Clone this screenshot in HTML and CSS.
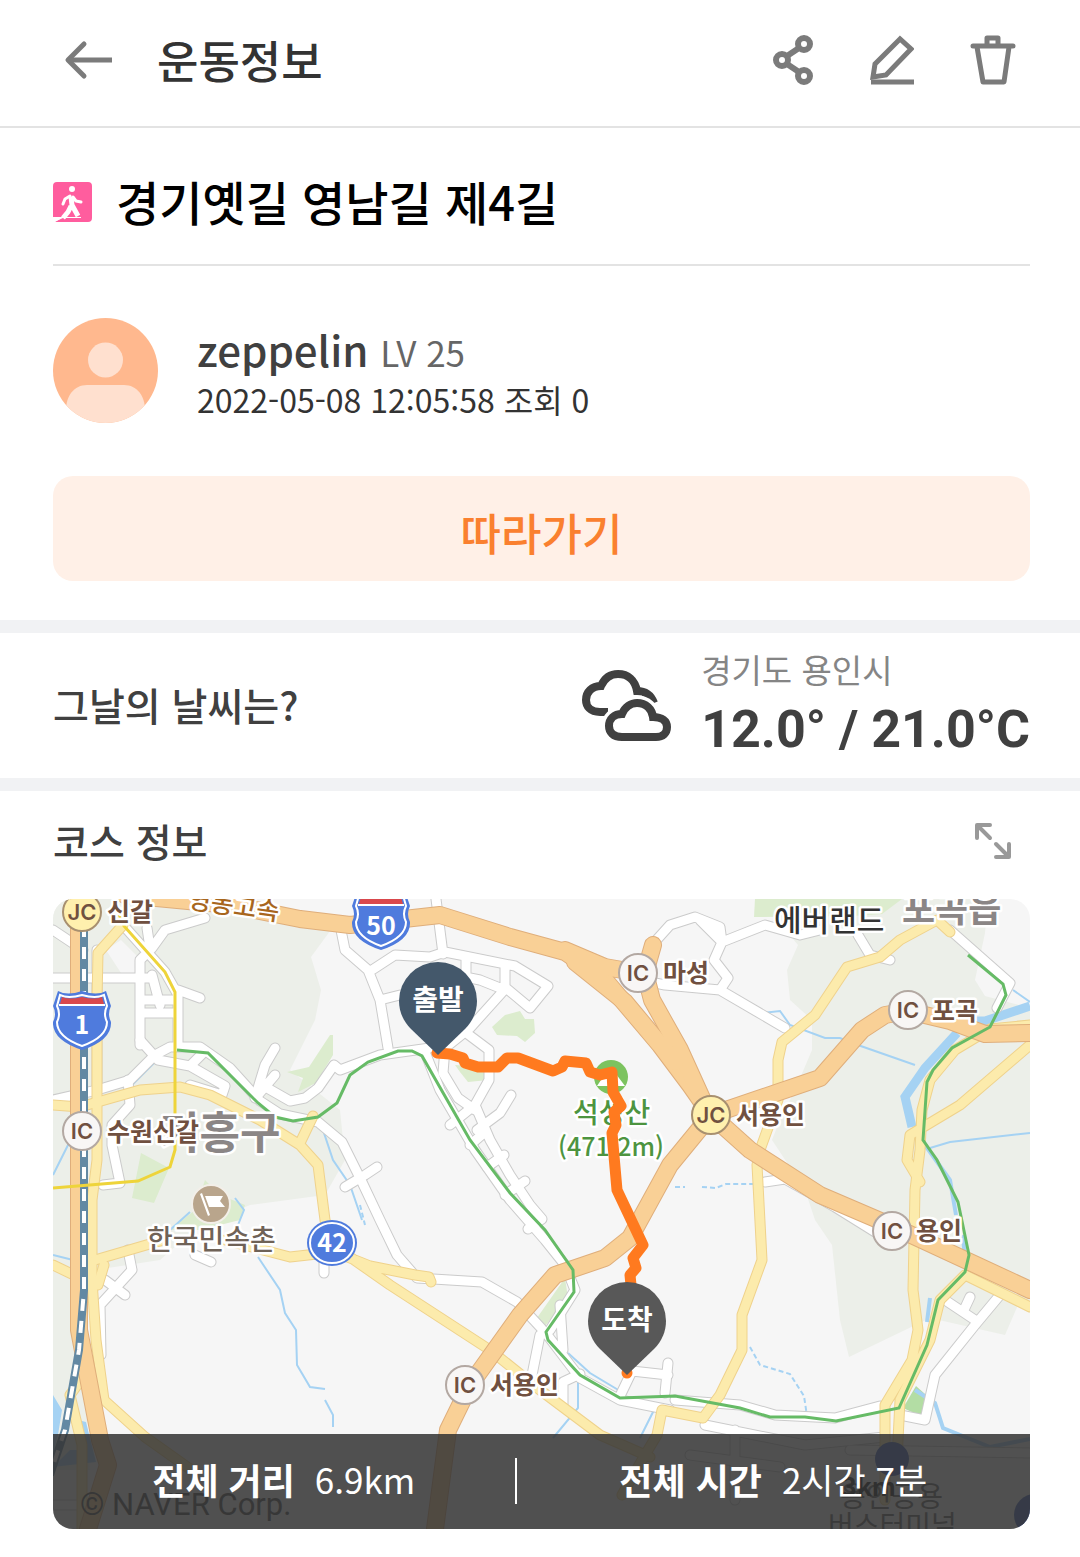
FILE: index.html
```html
<!DOCTYPE html>
<html lang="ko">
<head>
    <meta charset="UTF-8">
    <meta name="viewport" content="width=device-width, initial-scale=1.0">
    <title>운동정보</title>
    <link rel="stylesheet" href="styles.css">
</head>
<body>
    <header class="topbar">
        <button class="icon-btn" type="button" aria-label="뒤로">
            <svg width="48" height="40" viewBox="0 0 48 40" fill="none" stroke="#7b7b7b" stroke-width="5" stroke-linecap="round" stroke-linejoin="round">
                <path d="M20 4 4 20l16 16"/>
                <path d="M5 20h43" stroke-linecap="butt"/>
            </svg>
        </button>
        <h1 class="topbar-title">운동정보</h1>
        <div class="topbar-actions">
            <button class="icon-btn" type="button" aria-label="공유">
                <svg width="44" height="54" viewBox="0 0 44 54" fill="none" stroke="#7b7b7b" stroke-width="6">
                    <circle cx="34" cy="11" r="6"/>
                    <circle cx="12" cy="27" r="6"/>
                    <circle cx="34" cy="43" r="6"/>
                    <path d="m17 23 12-8M17 31l12 8"/>
                </svg>
            </button>
            <button class="icon-btn" type="button" aria-label="수정">
                <svg width="44" height="54" viewBox="0 0 44 54" fill="none" stroke="#7b7b7b" stroke-width="5" stroke-linejoin="round">
                    <path d="M30 6 5 31 3 44l13-2 25-26Z" stroke-linejoin="miter"/>
                    <path d="M1 49h43"/>
                </svg>
            </button>
            <button class="icon-btn" type="button" aria-label="삭제">
                <svg width="46" height="54" viewBox="0 0 46 54" fill="none" stroke="#7b7b7b" stroke-width="5" stroke-linecap="round" stroke-linejoin="round">
                    <path d="M3 13h40M17 12V5h11v7M7 14l6 35h21l5-35"/>
                </svg>
            </button>
        </div>
    </header>

    <main>
        <section class="post">
            <div class="post-title">
                <svg class="walk-icon" width="39" height="40" viewBox="0 0 39 40">
                    <path fill="#ff5d9e" d="M4 0h31a4 4 0 0 1 4 4v32a4 4 0 0 1-4 4H2l5-3-7-2V4a4 4 0 0 1 4-4Z"/>
                    <circle cx="19" cy="7" r="3" fill="#fff"/>
                    <path d="m17 14-5 3-2 5M20 15l3 4 5 1" fill="none" stroke="#fff" stroke-width="3" stroke-linecap="round" stroke-linejoin="round"/>
                    <path d="M18 15l1 8 6 11M18 24l-3 6-5 6" fill="none" stroke="#fff" stroke-width="5" stroke-linejoin="round"/>
                    <path fill="#fff" d="M0 35h28v1H10l-9 4Z"/>
                </svg>
                <h2>경기옛길 영남길 제4길</h2>
            </div>

            <div class="user">
                <svg class="avatar" width="105" height="105" viewBox="0 0 105 105">
                    <clipPath id="avatarClip"><circle cx="52.5" cy="52.5" r="52.5"/></clipPath>
                    <g clip-path="url(#avatarClip)">
                        <path fill="#ffb88e" d="M0 0h105v105H0z"/>
                        <circle cx="52.5" cy="42" r="17.5" fill="#ffe0cf"/>
                        <path fill="#ffe0cf" d="M13 105V92c0-14 8-25 21-25h37c13 0 21 11 21 25v13Z"/>
                    </g>
                </svg>
                <div>
                    <p class="user-name">zeppelin <span>LV 25</span></p>
                    <p class="user-meta">2022-05-08 12:05:58 조회 0</p>
                </div>
            </div>

            <button class="follow-btn" type="button">따라가기</button>
        </section>

        <section class="weather">
            <h3>그날의 날씨는?</h3>
            <svg class="weather-icon" width="92" height="74" viewBox="0 0 92 74">
                <path d="M27 43H19C9 43 5 37 5 31c0-8 6-14 15-14C24 8 30 5 37 5c10 0 17 6 19 17 9 0 14 4 17 12" fill="none" stroke="#404040" stroke-width="8"/>
                <path d="M41 68c-9 0-13-5-13-11 0-7 5-12 13-12 3-7 9-11 15-11 9 0 15 6 16 14 9 0 14 4 14 10s-4 10-11 10Z" fill="none" stroke="#fff" stroke-width="15"/>
                <path d="M41 68c-9 0-13-5-13-11 0-7 5-12 13-12 3-7 9-11 15-11 9 0 15 6 16 14 9 0 14 4 14 10s-4 10-11 10Z" fill="#fff" stroke="#404040" stroke-width="8"/>
            </svg>
            <div class="weather-info">
                <p class="weather-place">경기도 용인시</p>
                <p class="weather-temp">12.0° / 21.0°C</p>
            </div>
        </section>

        <section class="course">
            <div class="course-head">
                <h3>코스 정보</h3>
                <button class="icon-btn" type="button" aria-label="지도 확대">
                    <svg width="36" height="36" viewBox="0 0 36 36" fill="none" stroke="#999" stroke-width="4" stroke-linecap="round" stroke-linejoin="round">
                        <path d="M2 15V2h13M3 3l12 12M34 21v13H21M33 33 21 21"/>
                    </svg>
                </button>
            </div>

            <div class="map">
                <svg class="map-svg" viewBox="53 899 977 630" role="img" aria-label="코스 지도">
                    <defs>
                        <g id="streets">
                            <path d="M53 978h97M140 1045v-85l12-12 13-18 40-12M150 948l-3-20M140 1013h35M140 1000h35M152 975l8 30M123 925l42 47 13 23v50M178 990l22 8"/>
                            <path d="M53 1100l44-10 33-10 25-25 15-8h30l30 21 30 33 20 13 38 8 24 20 20 40 18 38 17 35 20 23 65 4 35 20 25 27"/>
                            <path d="M140 1040l18 20 32 6 35 20-3 9-32-10M190 1066l15-15M97 950v140M128 1080l2 25-18 20v20l8 38-17 2"/>
                            <path d="M255 1098l10-33 10-17M258 1095l17-20M262 1085l28 16 15-3 13-10 16-23 6 5 40-15 50-7M53 930l30 20"/>
                            <path d="M340 925l5 25 23 20 12 30 8 48M372 970l23-15 35 2 15-5 70 14 33 20-18 22-24-20-36 40-25 20-2 25 15 25 17 12M436 899l7 55M505 965v25l-25-10-25-5M380 1000l20-5M466 958v20"/>
                            <path d="M465 1032l24 18v30l-14 25-25 20M425 1052l15 38 35 60 35 50 35 40 20 25 10 25-25 40"/>
                            <path d="M475 1105l15 35 20 35 20 30 12 14-14 10M477 1130l23-17 11-18M470 1145l15-13M487 1167l17-12M505 1195l20-14"/>
                            <path d="M545 1332l35 46 40 22 50 10M540 1335l-8 40M563 1350l-3-45M580 1374l-17 8v24M620 1396l12-25 36 4M668 1363l-3 30"/>
                            <path d="M652 945l18-20 25-8 25 10 2 15 43-17 35 10 20-5M700 920l22 22-8 18 14 18-8 12-55-5-25-5M720 990l65 38M858 935l12 20 20 5"/>
                            <path d="M950 930l60 53-13 25M765 1182l20-3 50 28 45 28M1000 1295l-25 30-40 50-10 45-25-5M945 1300l30 20M970 1297l-7 15"/>
                            <path d="M675 1400l65 5 35 10 60 3 45-12M705 1425l100 20 80-8M735 1430v70M53 1505h30M850 1450l180 3M690 1455l90 12"/>
                            <path d="M128 1250l4 20-32 35 1 50M105 1280l20 15M195 1255l16 7M324 1255v18M345 1187l20-12 12-8"/>
                        </g>
                        <g id="roads">
                            <path d="M123 925l-25 28-1 47v160l-5 40v80l4 60 8 60 41 37 45 32"/>
                            <path d="M53 1105l27 2 60-17 40-3 30 8 50 25 40 25 18 20 7 55 5 30M300 1143l13-27M53 1265l25 12M95 1260l65-19M98 1285l6-20"/>
                            <path d="M225 1240l65 17 45-5 35 14 45 9 14 2 2 5M340 1250l50 35 100 65 50 40 60 45 50 22M88 1370l-18 25 12 50v84"/>
                            <path d="M950 932l-13-12-37 20-20 17-33 10-32 48-33 27-4 18v40l-18 50-3 15 5 95-20 55v35l-22 45-17 23-41-8-5 25-15 25-20 35"/>
                            <path d="M1030 1025l-40 4-35 21-25 30-8 30-2 40-5 40-2 100 5 40-6 30-27 45v95M1030 1045l-70 60-50 30-3 25 13 22M965 1275l-25 25-10 40-30 60-3 60M965 1275l65 32"/>
                        </g>
                        <g id="highway">
                            <path d="M125 895l105 10 70 14 50 6 90-10 70 22 55 15 40 28 55 65 30 40 21 30 39 35 70 45 70 30 140 65"/>
                            <path d="M653 945l-8 28 7 27 28 50 25 55M711 1115l109-37 42-48 23-15 23-4 42 10 35 13 45-1"/>
                            <path d="M711 1115l-41 50-40 73-25 20-50 17-35 40-50 70-22 45-13 99M79 895v435l21 110 8 25-20 64"/>
                            <path d="M565 950l40 17 40 7M575 962l50 40 50 60"/>
                        </g>
                        <path id="pin" d="M0 0-27-26C-35-34-39-44-39-54a39 39 0 1 1 78 0c0 10-4 20-12 28Z"/>
                        <g id="shield">
                            <path fill="#4f7bdd" d="M-24-29q9 5 24 0 15 5 24 0l5 15q-4 8 0 16 1 18-29 28-30-10-29-28 4-8 0-16Z"/>
                            <path fill="#4f7bdd" stroke="#fff" stroke-width="2" d="M-22-25q8 4 22 0 14 4 22 0l3 11q-4 8 0 16 0 15-25 24-25-9-25-24 4-8 0-16Z"/>
                            <path fill="#d9484c" d="M-20-23q8 3 20 0 12 3 20 0l2 7h-44Z"/>
                            <path fill="#fff" d="M-23-16h46v2h-46z"/>
                        </g>
                    </defs>

                    <path fill="#f6f6f6" d="M53 899h977v630H53z"/>

                    <!-- hills and parks -->
                    <g fill="#ecefe9">
                        <path d="M53 899h150l130 28-22 30 10 33-6 30-15 30-10 20 50 40 5 50-20 35-75 10-50 20-40 35-65 10-15 30 10 170H53Z"/>
                        <path d="M755 899h233l-3 34-10 47 10 16 45 12v297h-12l-13 30-75-17-81 39-9-37-8-75-17-25-10-30-33-50 8-20 15-30 17-40v-30l-22-20-3-30 11-25-25-30Z"/>
                    </g>
                    <path fill="#f6f6f6" d="M106 950l15-10 20 20v16h-18Z"/>
                    <g fill="#dcecce">
                        <path d="M755 899h147l-20 15-30 2-98 1Z"/>
                        <path d="M287 1072l22-5 21-32h3v20l-17 28-18 9 5-14ZM492 1027l13-12 15-4 5 8h9l1 14-10 9-8-6-20-1ZM455 1065l30 2 3 13-20 2-8-10ZM141 1153l28 15-15 35-22-5ZM170 1230l25-20 10-30 15 15 25 10-5 15-40 10ZM532 1325l33-47 3 20-23 28Z"/>
                    </g>
                    <path fill="#b3dda4" d="M903 1408l13-22 9 8-2 23Z"/>

                    <!-- rivers -->
                    <g class="water">
                        <path stroke-width="9" d="M1030 1006l-45 15h-15M957 1033l-32 35-20 29 7 30"/>
                        <path stroke-width="4" d="M925 1145l25 35 6 35M963 1235l2 25M930 1298l-3 24M915 1390l20 13 8 25 47 19 40-8"/>
                        <path stroke-width="2" d="M930 1148l20-6 80-9M1013 990l17 12M762 1013l18-2 10 14 35 13h15l15 6 60 21M258 1257l22 33 5 23 11 17 1 35 13 22 15 2M325 1400l8 15v12M318 1115l15 45 17 25 12 35M170 1230l20-18M235 1198l9 12-8 20M568 1353l22 20 30 18M578 1380v28l-25 30M53 1175l20-40M130 1087l25-25M655 1408l-15 30M53 1255l20 5"/>
                        <path stroke-width="2" stroke-dasharray="5 3" d="M750 1347l10 18 30 9 14 22 3 20M702 1187l14 1 10-4h28M360 1205l5 20M675 1187h10"/>
                    </g>
                    <path fill="#a5d2f3" d="M53 1395l9 15-4 25-5 20ZM70 1450h12l-4-30 8 2 10 40-43 5Z"/>

                    <use href="#streets" class="line street-edge"/>
                    <use href="#streets" class="line street"/>
                    <use href="#roads" class="line road-edge"/>
                    <use href="#roads" class="line road"/>
                    <use href="#highway" class="line highway-edge"/>
                    <use href="#highway" class="line highway"/>

                    <!-- railways -->
                    <path class="rail" d="M84 925v365l-5 60-14 80-15 45"/>
                    <path class="rail-dash" d="M84 925v365l-5 60-14 80-15 45"/>
                    <path class="metro yellow" d="M118 912l6 14 41 46 10 20v158l-5 17-32 14-85 7"/>
                    <path class="metro green" d="M177 1050l31 3 50 50 17 14 18 4 25-4 19-14 13-28 18-13 30-11h14l10 5 48 84 40 53 35 37 28 40 1 22-28 40 2 8 32 35 40 23 55-2 65 12 30 9h35l31 4 63-13 28-63 11-45 27-28 4-17-11-53-21-42-14-20 4-58 6-12 19-22 38-21 16-32-3-11-35-29"/>

                    <!-- summit -->
                    <circle cx="611" cy="1077" r="17" fill="#7cc35f"/>
                    <path fill="#fff" d="M597 1086l8-12 4 4 4-8 12 16Z"/>
                    <g class="label">
                        <text class="t28 summit" x="573" y="1123">석성산</text>
                        <text class="t25 summit" x="558" y="1156">(471.2m)</text>
                        <text class="t25 highway-name" transform="translate(187 908) rotate(8)">영동고속</text>
                        <text class="t44 district" x="159" y="1149">기흥구</text>
                        <text class="t36 district" x="902" y="922">포곡읍</text>
                        <text class="t30 place" x="774" y="931">에버랜드</text>
                        <text class="t28 village" x="147" y="1250">한국민속촌</text>
                        <text class="t25 exit" x="107" y="921">신갈</text>
                        <text class="t25 exit" x="107" y="1141">수원신갈</text>
                        <text class="t25 exit" x="663" y="982">마성</text>
                        <text class="t25 exit" x="736" y="1124">서용인</text>
                        <text class="t25 exit" x="932" y="1020">포곡</text>
                        <text class="t25 exit" x="916" y="1240">용인</text>
                        <text class="t25 exit" x="490" y="1394">서용인</text>
                    </g>

                    <circle cx="211" cy="1204" r="19" fill="#b9a58c" stroke="#f3efe9" stroke-width="2"/>
                    <path fill="#fff" d="M200 1194l2-1 8 22-2 1ZM205 1196h18l-3 5 5 6h-16Z"/>

                    <g class="junction">
                        <circle cx="82" cy="912" r="19" class="jc"/><text x="82" y="920">JC</text>
                        <circle cx="711" cy="1115" r="19" class="jc"/><text x="711" y="1123">JC</text>
                        <circle cx="638" cy="973" r="19"/><text x="638" y="981">IC</text>
                        <circle cx="908" cy="1010" r="19"/><text x="908" y="1018">IC</text>
                        <circle cx="82" cy="1131" r="19"/><text x="82" y="1139">IC</text>
                        <circle cx="892" cy="1231" r="19"/><text x="892" y="1239">IC</text>
                        <circle cx="465" cy="1385" r="19"/><text x="465" y="1393">IC</text>
                    </g>

                    <g class="route-no">
                        <use href="#shield" x="82" y="1020"/>
                        <text x="82" y="1034">1</text>
                        <use href="#shield" x="381" y="920"/>
                        <text x="381" y="935">50</text>
                        <ellipse cx="332" cy="1243" rx="25" ry="23" fill="#4f7bdd"/>
                        <ellipse cx="332" cy="1243" rx="22" ry="20" fill="none" stroke="#fff" stroke-width="2"/>
                        <text x="332" y="1252">42</text>
                        <circle cx="892" cy="1459" r="17" fill="#4a68b8"/>
                        <circle cx="1035" cy="1515" r="21" fill="#4a68b8"/>
                    </g>

                    <text class="t28 terminal" x="840" y="1507">용인공용</text>
                    <text class="t28 terminal" x="828" y="1536">버스터미널</text>
                    <text class="t25 scale" x="842" y="1496">3km</text>
                    <text class="credit" x="80" y="1515">© NAVER Corp.</text>

                    <!-- walked route -->
                    <path class="walk" d="M437 1053l13 1 13 4 2 5 13 4h20l9-9h11l35 13 9-4 3-6 21 2 4 9 10 3 12-3 1 20 8 14-7 6 2 13-4 8 5 57 26 55-10 13 3 10-6 7 2 20M627 1373v0"/>
                    <use href="#pin" x="438" y="1055" fill="#44586b"/>
                    <use href="#pin" x="627" y="1375" fill="#585858"/>
                    <g class="pin-text">
                        <text x="438" y="1010">출발</text>
                        <text x="627" y="1330">도착</text>
                    </g>
                </svg>

                <dl class="stats">
                    <div class="stat">
                        <dt>전체 거리</dt>
                        <dd>6.9km</dd>
                    </div>
                    <div class="stat">
                        <dt>전체 시간</dt>
                        <dd>2시간 7분</dd>
                    </div>
                </dl>
            </div>
        </section>
    </main>
</body>
</html>
```
FILE: styles.css
```css
* {
    margin: 0;
    padding: 0;
    box-sizing: border-box;
}

body {
    font-family: "Noto Sans CJK KR", "Noto Sans", sans-serif;
    background-color: #fff;
    color: #404040;
}

svg {
    display: block;
}

h1, h2, h3 {
    font-weight: 500;
}

.icon-btn {
    background: none;
    border: none;
    cursor: pointer;
}

/* top bar */
.topbar {
    display: flex;
    align-items: center;
    height: 128px;
    padding: 0 64px 6px;
    border-bottom: 2px solid #e3e3e3;
}

.topbar-title {
    flex: 1;
    margin-left: 45px;
    font-size: 45px;
    line-height: 64px;
    color: #333;
}

.topbar-actions {
    display: flex;
    gap: 56px;
}

/* post */
.post {
    padding: 0 50px 39px 53px;
}

.post-title {
    display: flex;
    align-items: center;
    gap: 24px;
    height: 138px;
    padding-top: 12px;
    border-bottom: 2px solid #e3e3e3;
    color: #000;
}

.post-title h2 {
    font-size: 47px;
    line-height: 64px;
    padding-bottom: 2px;
}

.user {
    display: flex;
    align-items: center;
    gap: 39px;
    margin: 52px 0 53px;
}

.user-name {
    font-size: 42px;
    line-height: 54px;
    font-weight: 500;
}

.user-name span {
    font-size: 35px;
    font-weight: 400;
    color: #666;
}

.user-meta {
    font-size: 32px;
    line-height: 40px;
    color: #333;
}

.follow-btn {
    display: block;
    width: 100%;
    height: 105px;
    padding-top: 6px;
    border: none;
    border-radius: 20px;
    background-color: #fff0e7;
    color: #fa802f;
    font-family: inherit;
    font-size: 44px;
    font-weight: 500;
    cursor: pointer;
}

/* weather */
.weather {
    display: flex;
    align-items: center;
    padding: 12px 50px 12px 53px;
    border-top: 13px solid #f1f2f4;
    border-bottom: 13px solid #f1f2f4;
}

.weather h3 {
    flex: 1;
    padding-bottom: 4px;
    font-size: 39px;
}

.weather-icon {
    margin-right: 28px;
}

.weather-place {
    font-size: 33px;
    line-height: 48px;
    font-weight: 400;
    color: #858585;
}

.weather-temp {
    font-family: Roboto, sans-serif;
    font-size: 52px;
    line-height: 73px;
    font-weight: 700;
}

/* course */
.course {
    padding: 0 50px 28px 53px;
}

.course-head {
    display: flex;
    align-items: center;
    justify-content: space-between;
    height: 108px;
    padding: 0 19px 8px 0;
}

.course-head h3 {
    padding-bottom: 2px;
    font-size: 39px;
}

.map {
    position: relative;
    overflow: hidden;
    border-radius: 20px;
}

.map-svg {
    width: 100%;
    height: auto;
}

.line {
    fill: none;
    stroke-linecap: round;
    stroke-linejoin: round;
}

.street-edge {
    stroke: #cbcbcb;
    stroke-width: 11px;
}

.street {
    stroke: #fff;
    stroke-width: 9px;
}

.road-edge {
    stroke: #efd28c;
    stroke-width: 11px;
}

.road {
    stroke: #fcebac;
    stroke-width: 9px;
}

.highway-edge {
    stroke: #dfae7b;
    stroke-width: 18px;
}

.highway {
    stroke: #f9d096;
    stroke-width: 16px;
}

.water {
    fill: none;
    stroke: #a5d2f3;
}

.rail {
    fill: none;
    stroke: #6389a3;
    stroke-width: 8px;
}

.rail-dash {
    fill: none;
    stroke: #fff;
    stroke-width: 4px;
    stroke-dasharray: 12px 10px;
}

.metro {
    fill: none;
    stroke-width: 3px;
}

.yellow {
    stroke: #eed43a;
}

.green {
    stroke: #66bb66;
}

.walk {
    fill: none;
    stroke: #ff7a1f;
    stroke-width: 11px;
    stroke-linejoin: round;
    stroke-linecap: round;
}

.label text {
    font-weight: 500;
    stroke: #fff;
    stroke-width: 5px;
    stroke-linejoin: round;
    paint-order: stroke;
}

.t25 {
    font-size: 25px;
}

.t28 {
    font-size: 28px;
}

.t30 {
    font-size: 30px;
}

.t36 {
    font-size: 36px;
}

.t44 {
    font-size: 44px;
}

.summit {
    fill: #4d9440;
}

.highway-name {
    fill: #a8661d;
}

.label .district {
    font-weight: 700;
    fill: #8b8686;
}

.place {
    fill: #333;
}

.village {
    fill: #6f6257;
}

.label .exit {
    font-weight: 700;
    fill: #705040;
}

.junction circle {
    fill: #f8f6f5;
    stroke: #b3a8a2;
    stroke-width: 2px;
}

.junction .jc {
    fill: #fff0ae;
    stroke: #a89070;
}

.junction text {
    font-family: Inter, sans-serif;
    font-size: 22px;
    font-weight: 600;
    fill: #705040;
    text-anchor: middle;
}

.route-no text {
    font-size: 25px;
    font-weight: 700;
    fill: #fff;
    text-anchor: middle;
}

.terminal {
    fill: #666;
}

.scale {
    font-weight: 700;
    fill: #222;
}

.credit {
    font-family: Roboto, sans-serif;
    font-size: 31px;
    fill: #555;
}

.pin-text {
    font-size: 28px;
    font-weight: 700;
    fill: #fff;
    text-anchor: middle;
}

.stats {
    position: absolute;
    left: 0;
    right: 0;
    bottom: 0;
    display: flex;
    align-items: center;
    height: 95px;
    padding-bottom: 2px;
    background-color: rgba(50, 50, 50, 0.85);
    color: #fff;
}

.stat {
    flex: 1;
    display: flex;
    align-items: center;
    justify-content: center;
    gap: 20px;
    line-height: 42px;
}

.stat + .stat {
    flex: 1 1 54px;
    border-left: 2px solid #fff;
}

.stat dt,
.stat dd {
    padding-bottom: 4px;
}

.stat dt {
    font-size: 36px;
    font-weight: 700;
}

.stat dd {
    font-size: 35px;
}
```
